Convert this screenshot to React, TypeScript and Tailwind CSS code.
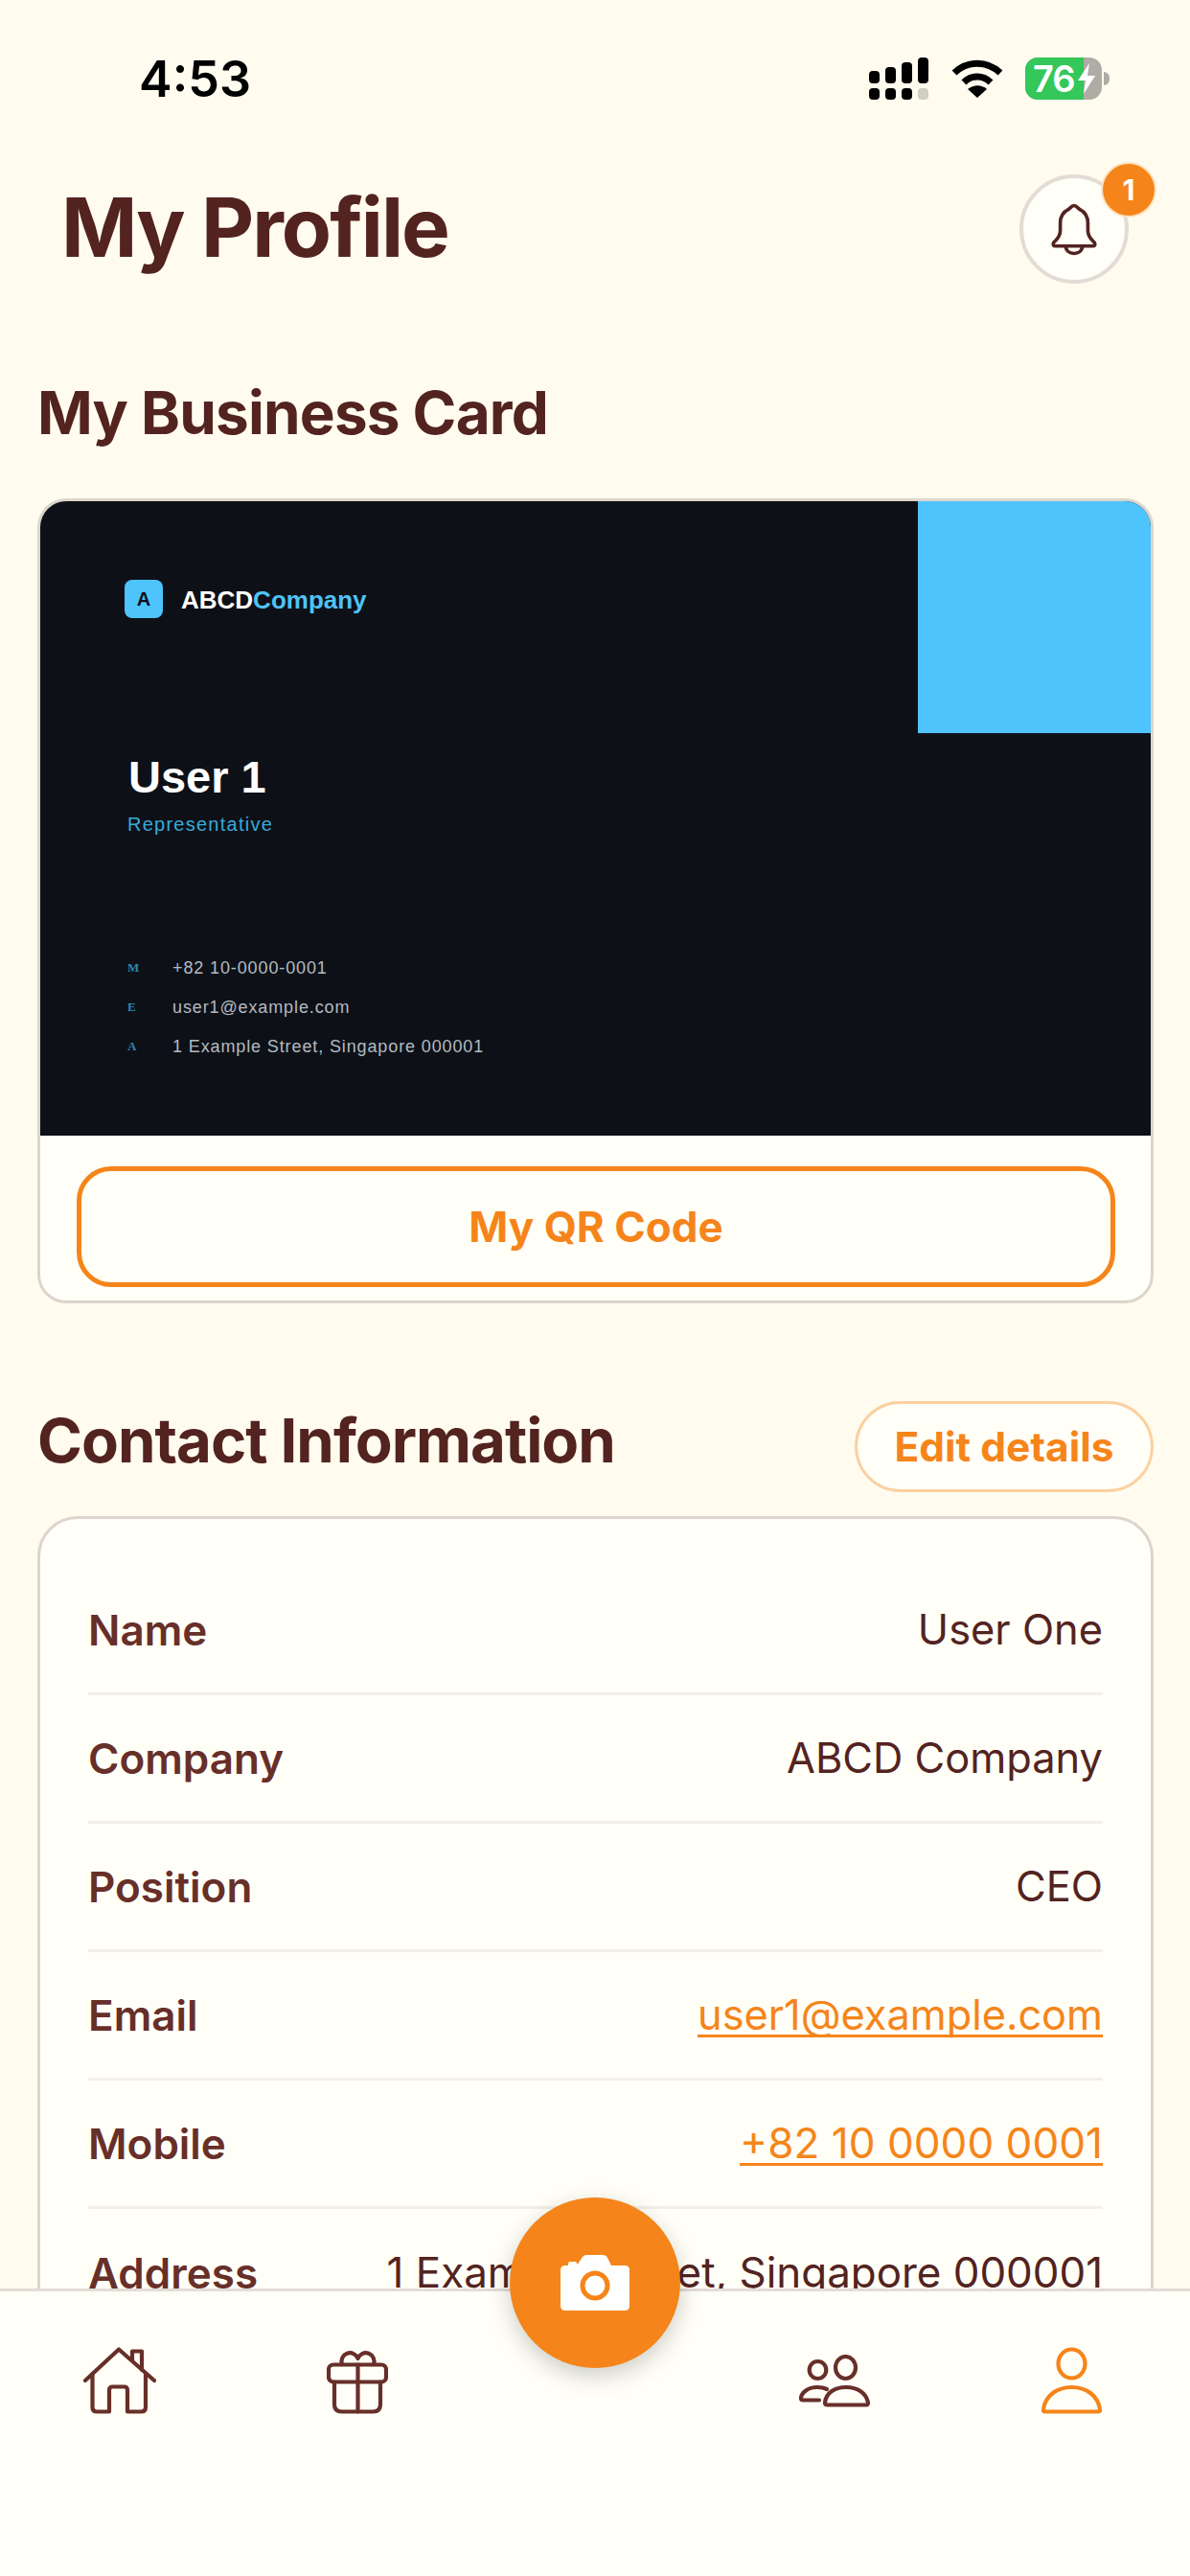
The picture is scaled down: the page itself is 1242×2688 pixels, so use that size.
const rows = [
  { label: 'Name', value: 'User One', size: 'text-[43.4px]' },
  { label: 'Company', value: 'ABCD Company', size: 'text-[43.4px]' },
  { label: 'Position', value: 'CEO', size: 'text-[43.4px]' },
  { label: 'Email', value: 'user1@example.com', size: 'text-[43.3px]', link: true },
  { label: 'Mobile', value: '+82 10 0000 0001', size: 'text-[44.1px]', link: true },
  { label: 'Address', value: '1 Example Street, Singapore 000001', size: 'text-[43.9px]' },
];

const cardLines = [
  { key: 'M', value: '+82 10-0000-0001' },
  { key: 'E', value: 'user1@example.com' },
  { key: 'A', value: '1 Example Street, Singapore 000001' },
];

function StatusIcons() {
  return (
    <div className="flex items-center">
      <svg width="62" height="44" viewBox="0 0 62 44" className="text-black">
        <rect x="0" y="14" width="11" height="13" rx="4" fill="currentColor" />
        <rect x="17" y="10" width="11" height="17" rx="4" fill="currentColor" />
        <rect x="34" y="5" width="11" height="22" rx="4" fill="currentColor" />
        <rect x="51" y="0" width="11" height="27" rx="4" fill="currentColor" />
        <rect x="0" y="32" width="11" height="12" rx="4" fill="currentColor" />
        <rect x="17" y="32" width="11" height="12" rx="4" fill="currentColor" />
        <rect x="34" y="32" width="11" height="12" rx="4" fill="currentColor" />
        <rect x="51" y="32" width="11" height="12" rx="4" fill="#cfcec3" />
      </svg>
      <svg width="54" height="40" viewBox="0 0 54 40" className="ml-[24px]" fill="none" stroke="black" strokeWidth="7">
        <path d="M3 14 C17 1 37 1 51 14" />
        <path d="M13 24 C21 16 33 16 41 24" />
        <path d="M27 40 L17 31 C23 26 31 26 37 31 Z" fill="black" stroke="none" />
      </svg>
      <div className="relative ml-[23px] h-[44px] w-[80px] overflow-hidden rounded-[13px] bg-[#aeaca4]">
        <div className="h-full w-[61px] bg-[#34c759]" />
        <span className="absolute left-[8px] top-0 text-[38px] leading-[44px] font-semibold tracking-[-1px] text-white">76</span>
        <svg width="18" height="32" viewBox="0 0 18 32" className="absolute left-[55px] top-[6px]">
          <path d="M12 0 L0 18 H8 L6 32 L18 13 H10 Z" fill="white" />
        </svg>
      </div>
      <div className="ml-[2px] h-[14px] w-[6px] rounded-r-full bg-[#aeaca4]" />
    </div>
  );
}

function HomeIcon() {
  return (
    <svg width="76" height="70" viewBox="0 0 76 70" fill="none" stroke="#682f29" strokeWidth="4.2" strokeLinecap="round" strokeLinejoin="round">
      <path d="M2 35 L37 2.5 L74 35" />
      <path d="M51 14 V4.5 H61 V24" />
      <path d="M9.5 28 V63 Q9.5 67.5 14 67.5 H27 V45 Q27 41.5 30.5 41.5 H42.5 Q46 41.5 46 45 V67.5 H60.5 Q65 67.5 65 63 V28" />
    </svg>
  );
}

function GiftIcon() {
  return (
    <svg width="64" height="70" viewBox="0 0 64 70" fill="none" stroke="#682f29" strokeWidth="4.2" strokeLinecap="round" strokeLinejoin="round">
      <rect x="2" y="18.5" width="60" height="18" rx="5" />
      <path d="M8 36.5 V60 Q8 67.5 15.5 67.5 H48.5 Q56 67.5 56 60 V36.5" />
      <path d="M32.5 18.5 V67.5" />
      <path d="M16 18 A8.5 8.5 0 1 1 32.5 12 A8.5 8.5 0 1 1 49 18" />
    </svg>
  );
}

function GroupIcon() {
  return (
    <svg width="75" height="55" viewBox="0 0 75 55" fill="none" stroke="#682f29" strokeWidth="4.2" strokeLinecap="round" strokeLinejoin="round">
      <ellipse cx="20.5" cy="16" rx="8.8" ry="9" />
      <ellipse cx="49.5" cy="13.5" rx="10.5" ry="11.5" />
      <path d="M30 36 Q26 34 20 34 C10 34 3 40 3 45.5 Q3 47.5 5 47.5 H22" />
      <path d="M28 50 C29 40 38 34 50 34 C62 34 71 40 73 50 Q73 52.5 70.5 52.5 H30.5 Q28 52.5 28 50 Z" />
    </svg>
  );
}

function UserIcon() {
  return (
    <svg width="65" height="70" viewBox="0 0 65 70" fill="none" stroke="#f5851a" strokeWidth="4.2" strokeLinecap="round" strokeLinejoin="round">
      <ellipse cx="32.5" cy="17.5" rx="14" ry="15" />
      <path d="M3 65 C5 51 17 42 32.5 42 C48 42 60 51 62 65 Q62.5 67.5 60 67.5 H5 Q2.5 67.5 3 65 Z" />
    </svg>
  );
}

function CameraIcon() {
  return (
    <svg width="72" height="58" viewBox="0 0 72 58">
      <path
        fillRule="evenodd"
        d="M5 11 H8 V9 Q8 7 10 7 H15 Q17 7 17 9 V9.5 H18 L23 2 Q24.5 0 27 0 H44 Q47 0 48.5 2 L53 11 H67 Q72 11 72 16 V53 Q72 58 67 58 H5 Q0 58 0 53 V16 Q0 11 5 11 Z M36 16.5 A15.5 15.5 0 1 0 36 47.5 A15.5 15.5 0 1 0 36 16.5 Z M36 21.5 A10.5 10.5 0 1 1 36 42.5 A10.5 10.5 0 1 1 36 21.5 Z"
        fill="white"
      />
    </svg>
  );
}

function BellIcon() {
  return (
    <svg width="48" height="55" viewBox="0 0 50 56" fill="none" stroke="#532320" strokeWidth="3.8" strokeLinecap="round" strokeLinejoin="round">
      <path d="M25 2 C28 2 29 5 31 6 C37 9 40 14 40 21 V29 C40 36 44 39 47 42 Q49 46 45 46 H5 Q1 46 3 42 C6 39 10 36 10 29 V21 C10 14 13 9 19 6 C21 5 22 2 25 2 Z" />
      <path d="M16 46 C16 51 20 54 25 54 C30 54 34 51 34 46" />
    </svg>
  );
}

export default function App() {
  return (
    <div className="relative h-[2688px] w-[1242px] overflow-hidden bg-[#fffcef] font-['Inter',sans-serif]">
      <div className="flex h-[150px] items-start justify-between pl-[145px] pr-[84px] pt-[60px]">
        <span className="text-[52px] leading-[46px] font-semibold text-black">4:53</span>
        <StatusIcons />
      </div>

      <div className="flex h-[150px] items-start justify-between pl-[64px] pr-[64px] pt-[32px]">
        <h1 className="text-[85.3px] leading-[110px] font-bold tracking-[-2px] text-[#532320]">My Profile</h1>
        <div className="relative flex h-[114px] w-[114px] items-center justify-center rounded-full border-[4px] border-[#e2dcd5] bg-[#fffff8]">
          <BellIcon />
          <div className="absolute -right-[31px] -top-[15px] flex h-[54px] w-[54px] items-center justify-center rounded-full bg-[#f5851a] text-[30px] font-bold text-white ring-2 ring-[#fde3c5]">
            1
          </div>
        </div>
      </div>

      <div className="pl-[39px] pr-[38px]">
        <h2 className="mt-[92px] h-[78px] text-[62px] leading-[78px] font-bold tracking-[-0.8px] text-[#532320]">My Business Card</h2>
        <div className="mt-[50px] overflow-hidden rounded-[30px] border-[3px] border-[#dcd5cd] bg-[#fffff8]">
          <div className="relative h-[662px] bg-[#0d1117] pl-[88px] font-['Liberation_Sans',sans-serif]">
            <div className="absolute right-0 top-0 h-[242px] w-[243px] bg-[#4fc3fb]" />
            <div className="flex items-center pt-[81px]">
              <div className="flex h-[40px] w-[40px] items-center justify-center rounded-[8px] bg-[#4fc3fb] text-[20px] font-bold text-[#0d1117]">A</div>
              <div className="ml-[19px] mt-[2px] text-[26px] leading-[40px] font-bold text-white">
                ABCD<span className="text-[#4fc3f7]">Company</span>
              </div>
            </div>
            <div className="ml-[4px] mt-[138px] text-[47px] leading-[54px] font-bold text-white">User 1</div>
            <div className="ml-[3px] mt-[9px] text-[20px] leading-[26px] tracking-[1.25px] text-[#3aa9dc]">Representative</div>
            <div className="ml-[3px] mt-[123px] flex flex-col gap-[13px]">
              {cardLines.map((line) => (
                <div key={line.key} className="flex h-[28px] items-center">
                  <span className="w-[47px] font-['Liberation_Serif',serif] text-[13px] font-bold text-[#2f86b2]">{line.key}</span>
                  <span className="text-[18px] tracking-[0.88px] text-[#b4bac1]">{line.value}</span>
                </div>
              ))}
            </div>
          </div>
          <div className="pb-[14px] pl-[38px] pr-[37px] pt-[32px]">
            <div className="flex h-[126px] items-center justify-center rounded-[36px] border-[5px] border-[#f5851a] text-[44px] font-bold text-[#f5851a]">
              My QR Code
            </div>
          </div>
        </div>

        <div className="mt-[102px] flex items-center justify-between">
          <h2 className="mb-[14px] text-[63.5px] leading-[76px] font-bold tracking-[-1px] text-[#532320]">Contact Information</h2>
          <div className="flex h-[95px] w-[312px] items-center justify-center rounded-full border-[3px] border-[#fbd09f] bg-[#fffff8] text-[42.5px] font-bold text-[#f5851a]">
            Edit details
          </div>
        </div>

        <div className="mt-[25px] rounded-[42px] border-[3px] border-[#dcd5cd] bg-[#fffff8] px-[50px] pt-[50px]">
          {rows.map((row, i) => (
            <div
              key={row.label}
              className={`flex h-[134px] items-center justify-between ${i < rows.length - 1 ? 'border-b-[3px] border-[#f2efe7]' : ''}`}
            >
              <span className="text-[44px] font-semibold text-[#682f29]">{row.label}</span>
              {row.link ? (
                <span className={`${row.size} text-[#f5851a] underline underline-offset-[5px] [text-decoration-skip-ink:none] decoration-[3px]`}>{row.value}</span>
              ) : (
                <span className={`${row.size} text-[#532320]`}>{row.value}</span>
              )}
            </div>
          ))}
        </div>
      </div>

      <div className="absolute bottom-0 left-0 h-[300px] w-full border-t-[3px] border-[#e2dcd5] bg-[#fffff8]">
        <div className="flex items-start pl-[87px] pt-[58px]">
          <HomeIcon />
          <div className="ml-[178px]"><GiftIcon /></div>
          <div className="ml-[428px] mt-[8px]"><GroupIcon /></div>
          <div className="ml-[178px]"><UserIcon /></div>
        </div>
      </div>
      <div className="absolute left-[532px] top-[2293px] flex h-[178px] w-[178px] items-center justify-center rounded-full bg-[#f5851a] shadow-[0_8px_24px_rgba(0,0,0,0.2)]">
        <CameraIcon />
      </div>
    </div>
  );
}
